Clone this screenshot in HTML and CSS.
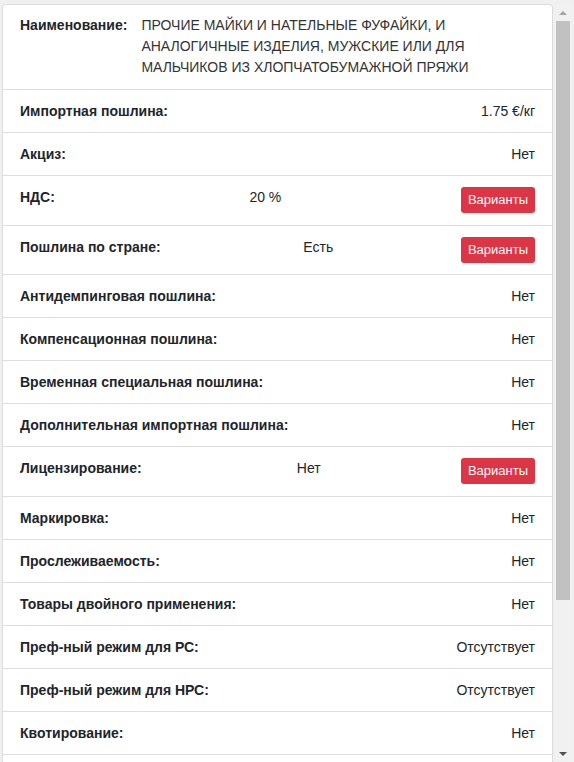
FILE: index.html
```html
<!DOCTYPE html>
<html lang="ru">
<head>
<meta charset="utf-8">
<title>Товар</title>
<link rel="stylesheet" href="styles.css">
</head>
<body>
<div class="frame">
  <div class="viewport">
    <div class="card">
      <div class="row row-name">
        <span class="label">Наименование:</span>
        <span class="name-value">ПРОЧИЕ МАЙКИ И НАТЕЛЬНЫЕ ФУФАЙКИ, И АНАЛОГИЧНЫЕ ИЗДЕЛИЯ, МУЖСКИЕ ИЛИ ДЛЯ МАЛЬЧИКОВ ИЗ ХЛОПЧАТОБУМАЖНОЙ ПРЯЖИ</span>
      </div>
      <div class="row"><span class="label">Импортная пошлина:</span><span class="value">1.75 €/кг</span></div>
      <div class="row"><span class="label">Акциз:</span><span class="value">Нет</span></div>
      <div class="row row-btn"><span class="label">НДС:</span><span class="value">20 %</span><button class="btn">Варианты</button></div>
      <div class="row row-btn"><span class="label">Пошлина по стране:</span><span class="value">Есть</span><button class="btn">Варианты</button></div>
      <div class="row"><span class="label">Антидемпинговая пошлина:</span><span class="value">Нет</span></div>
      <div class="row"><span class="label">Компенсационная пошлина:</span><span class="value">Нет</span></div>
      <div class="row"><span class="label">Временная специальная пошлина:</span><span class="value">Нет</span></div>
      <div class="row"><span class="label">Дополнительная импортная пошлина:</span><span class="value">Нет</span></div>
      <div class="row row-btn"><span class="label">Лицензирование:</span><span class="value">Нет</span><button class="btn">Варианты</button></div>
      <div class="row"><span class="label">Маркировка:</span><span class="value">Нет</span></div>
      <div class="row"><span class="label">Прослеживаемость:</span><span class="value">Нет</span></div>
      <div class="row"><span class="label">Товары двойного применения:</span><span class="value">Нет</span></div>
      <div class="row"><span class="label">Преф-ный режим для РС:</span><span class="value">Отсутствует</span></div>
      <div class="row"><span class="label">Преф-ный режим для НРС:</span><span class="value">Отсутствует</span></div>
      <div class="row"><span class="label">Квотирование:</span><span class="value">Нет</span></div>
      <div class="row-rest"></div>
    </div>
  </div>
  <div class="scrollbar">
    <div class="sb-btn">
      <svg width="8" height="4" viewBox="0 0 8 4"><polygon points="0,4 4,0 8,4" fill="#a3a3a3"/></svg>
    </div>
    <div class="sb-track">
      <div class="sb-thumb"></div>
    </div>
    <div class="sb-btn">
      <svg width="8" height="4" viewBox="0 0 8 4"><polygon points="0,0 8,0 4,4" fill="#505050"/></svg>
    </div>
  </div>
</div>
</body>
</html>
```
FILE: styles.css
```css
html, body {
  margin: 0;
  padding: 0;
}
body {
  background: #f0f0f0;
  font-family: "Liberation Sans", Arial, sans-serif;
  font-size: 14px;
  color: #212529;
  padding-top: 4px;
}
.frame {
  display: flex;
  height: calc(100vh - 4px);
  margin-right: 2px;
}
.viewport {
  flex: 1;
  overflow: hidden;
}
.scrollbar {
  flex: none;
  width: 17px;
  display: flex;
  flex-direction: column;
  background: #f1f1f1;
}
.sb-btn {
  height: 17px;
  flex: none;
  display: flex;
  align-items: center;
  justify-content: center;
}
.sb-btn svg {
  display: block;
  margin-left: -1px;
}
.sb-track {
  flex: 1;
  display: flex;
  flex-direction: column;
}
.sb-thumb {
  height: 579px;
  margin: 0 2px 0 1px;
  background: #c1c1c1;
}
.card {
  margin: 0 2px 0 2px;
  background: #fff;
  border: 1px solid #dcdcdc;
  border-radius: 4px;
}
.row {
  display: flex;
  justify-content: space-between;
  align-items: flex-start;
  padding: 11px 17px 11px 17px;
  line-height: 20px;
  border-bottom: 1px solid #dedede;
}
.row-rest {
  height: 60px;
}
.row-name {
  justify-content: flex-start;
  padding: 10px 17px 11px 17px;
  line-height: 21px;
}
.row-name .label {
  flex: none;
  margin-right: 14px;
}
.name-value {
  color: #333;
}
.label {
  font-weight: bold;
}
.row-btn {
  padding-bottom: 11.5px;
}
.row-btn .label {
  margin-right: 15px;
}
.btn {
  font-family: "Liberation Sans", Arial, sans-serif;
  font-size: 13px;
  height: 26px;
  line-height: 26px;
  padding: 0 7px;
  color: #fff;
  background: #dc3545;
  border: none;
  border-radius: 3px;
}
```
